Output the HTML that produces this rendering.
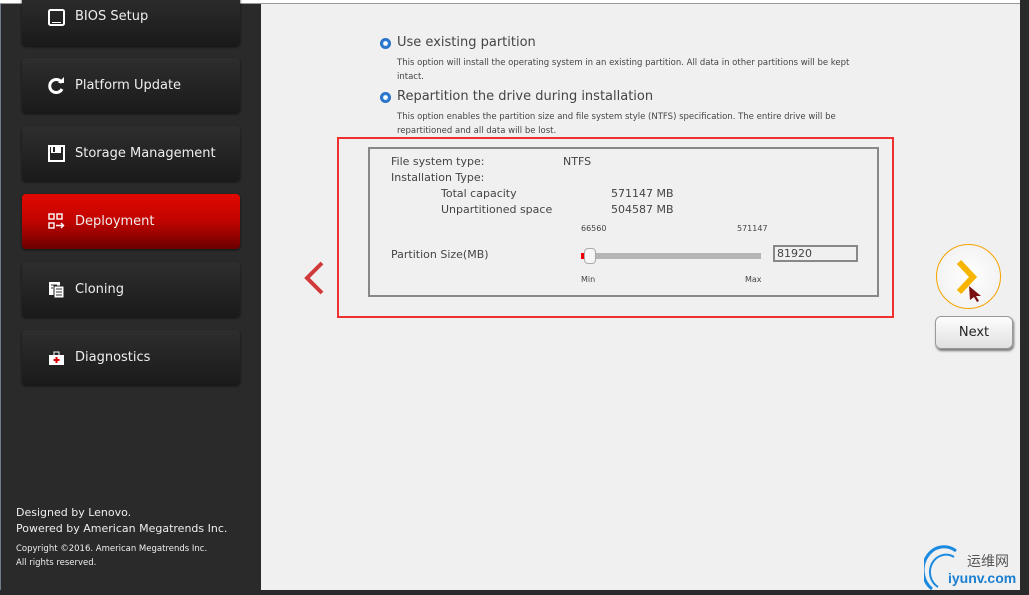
<!DOCTYPE html><html><head><style>
*{margin:0;padding:0;box-sizing:border-box}
body{width:1029px;height:595px;position:relative;overflow:hidden;background:#f0f0f0;font-family:"DejaVu Sans","Liberation Sans",sans-serif}
.side{position:absolute;left:0;top:4px;width:261px;height:586px;background:#2a2a2a;border-left:1px solid #6d7b8a}
.topbar{position:absolute;left:0;top:0;width:1029px;height:4px;background:#fff;border-bottom:1px solid #999}
.rb{position:absolute;right:0;top:0;width:9px;height:595px;background:#2a2a2a}
.bb{position:absolute;left:0;bottom:0;width:1029px;height:5px;background:#2a2a2a}
.btn{position:absolute;left:21px;width:218px;height:55px;border-radius:4px;background:linear-gradient(#2e2e2e,#1a1a1a);box-shadow:0 1px 2px #111;color:#eee;font-size:13px;line-height:55px;padding-left:53px}
.btn.act{background:linear-gradient(#e20800,#c00400 50%,#6a0000)}
.ic{position:absolute;left:26px;top:19px;width:17px;height:17px}
.ft{position:absolute;left:15px;color:#eee;white-space:nowrap}
.main{position:absolute;left:261px;top:5px;width:759px;height:585px;background:#f0f0f0}
.t{position:absolute;color:#444;white-space:nowrap}
.radio{position:absolute;width:11px;height:11px;border-radius:50%;background:radial-gradient(#fff 25%,#2f7fd6 35%,#1b5fb0)}
</style></head><body>
<div class="topbar"></div>
<div class="side">
<div class="btn" style="top:-12px;height:54px;line-height:50px">BIOS Setup<svg class="ic" style="top:17px" viewBox="0 0 17 17"><rect x="1" y="1" width="15" height="15" rx="1.5" fill="none" stroke="#fff" stroke-width="2"/><rect x="4" y="13" width="9" height="1" fill="#fff"/></svg></div>
<div class="btn" style="top:54px">Platform Update<svg class="ic" viewBox="0 0 17 17"><path d="M14 6A6.5 6.5 0 1 0 14 12" fill="none" stroke="#fff" stroke-width="3"/><path d="M10 6h6V0z" fill="#fff"/></svg></div>
<div class="btn" style="top:122px">Storage Management<svg class="ic" viewBox="0 0 17 17"><rect x="1" y="1" width="15" height="15" fill="none" stroke="#fff" stroke-width="2"/><rect x="3" y="1" width="10" height="7" fill="#fff"/><rect x="5" y="2" width="2" height="5" fill="#222"/></svg></div>
<div class="btn act" style="top:190px">Deployment<svg class="ic" viewBox="0 0 17 17"><g fill="none" stroke="#fff" stroke-width="1.4"><rect x="1" y="1" width="5" height="5"/><rect x="9" y="1" width="5" height="5"/><rect x="1" y="10" width="5" height="5"/><path d="M8 12.5h7M13 10l2.5 2.5L13 15"/></g></svg></div>
<div class="btn" style="top:258px">Cloning<svg class="ic" viewBox="0 0 17 17"><rect x="1" y="1" width="11" height="13" fill="#fff"/><rect x="6" y="5" width="10" height="12" fill="#fff" stroke="#222"/><path d="M8 8h6M8 11h6M8 14h6M3 4h6M3 7h2" stroke="#333"/></svg></div>
<div class="btn" style="top:326px">Diagnostics<svg class="ic" viewBox="0 0 17 17"><rect x="1" y="6" width="15" height="10" fill="#fff"/><rect x="6" y="3" width="5" height="4" fill="none" stroke="#fff"/><path d="M8.5 8v6M5.5 11h6" stroke="#d00" stroke-width="2"/></svg></div>
<div class="ft" style="top:502px;font-size:11px">Designed by Lenovo.</div>
<div class="ft" style="top:518px;font-size:11px">Powered by American Megatrends Inc.</div>
<div class="ft" style="top:540px;font-size:8.5px">Copyright ©2016. American Megatrends Inc.</div>
<div class="ft" style="top:554px;font-size:8.5px">All rights reserved.</div>
</div>
<div class="main">
<div class="radio" style="left:119px;top:33px"></div>
<div class="t" style="left:136px;top:30px;font-size:13px">Use existing partition</div>
<div class="t" style="left:136px;top:51px;font-size:8.5px;line-height:14px;white-space:normal;width:460px">This option will install the operating system in an existing partition. All data in other partitions will be kept intact.</div>
<div class="radio" style="left:119px;top:87px"></div>
<div class="t" style="left:136px;top:84px;font-size:13px">Repartition the drive during installation</div>
<div class="t" style="left:136px;top:105px;font-size:8.5px;line-height:14px;white-space:normal;width:460px">This option enables the partition size and file system style (NTFS) specification. The entire drive will be repartitioned and all data will be lost.</div>
<div style="position:absolute;left:76px;top:132px;width:557px;height:181px;border:2px solid #f03030"></div>
<div style="position:absolute;left:107px;top:142px;width:511px;height:150px;border:2px solid #888"></div>
<div class="t" style="left:130px;top:150px;font-size:11px">File system type:</div>
<div class="t" style="left:302px;top:150px;font-size:11px">NTFS</div>
<div class="t" style="left:130px;top:166px;font-size:11px">Installation Type:</div>
<div class="t" style="left:180px;top:182px;font-size:11px">Total capacity</div>
<div class="t" style="left:350px;top:182px;font-size:11px">571147 MB</div>
<div class="t" style="left:180px;top:198px;font-size:11px">Unpartitioned space</div>
<div class="t" style="left:350px;top:198px;font-size:11px">504587 MB</div>
<div class="t" style="left:320px;top:219px;font-size:8px">66560</div>
<div class="t" style="left:476px;top:219px;font-size:8px">571147</div>
<div class="t" style="left:130px;top:243px;font-size:11px">Partition Size(MB)</div>
<div style="position:absolute;left:320px;top:248px;width:180px;height:6px;background:#b5b5b5"></div>
<div style="position:absolute;left:320px;top:248px;width:4px;height:6px;background:#e00"></div>
<div style="position:absolute;left:323px;top:243px;width:12px;height:16px;border:1px solid #aaa;border-radius:4px;background:#f6f6f6"></div>
<div style="position:absolute;left:512px;top:240px;width:85px;height:17px;border:2px solid #888;font-size:11px;color:#444;padding-left:2px;line-height:13px">81920</div>
<div class="t" style="left:320px;top:270px;font-size:8px">Min</div>
<div class="t" style="left:484px;top:270px;font-size:8px">Max</div>
<svg style="position:absolute;left:41px;top:255px" width="24" height="36" viewBox="0 0 24 36"><path d="M20 3L5 18l15 15" fill="none" stroke="#d03a3a" stroke-width="4"/></svg>
<div style="position:absolute;left:675px;top:239px;width:65px;height:65px;border-radius:50%;border:1px solid #f5a300;background:radial-gradient(#fff,#eee)"></div>
<svg style="position:absolute;left:692px;top:253px" width="40" height="45" viewBox="0 0 40 45"><path d="M6 4l14 15L6 34" fill="none" stroke="#f7b500" stroke-width="6"/><path d="M16 28l12 10-5 0 3 5-2 1-3-5-4 3z" fill="#7a1010"/></svg>
<div style="position:absolute;left:674px;top:311px;width:78px;height:33px;border:1px solid #999;border-radius:6px;background:linear-gradient(#fdfdfd,#e0e0e0);box-shadow:1px 2px 2px #777;text-align:center;line-height:31px;font-size:13px;color:#222">Next</div>
<svg style="position:absolute;left:663px;top:538px" width="40" height="50" viewBox="0 0 40 50"><path d="M32 8A18 20 0 0 0 8 46" fill="none" stroke="#1a8ae0" stroke-width="3"/><path d="M30 14A13 14 0 0 0 14 44" fill="none" stroke="#1a8ae0" stroke-width="2"/></svg>
<div class="t" style="left:706px;top:546px;font-size:14px;color:#555;font-family:'Noto Sans CJK SC',sans-serif">运维网</div>
<div class="t" style="left:687px;top:565px;font-size:14px;color:#1a7fd0;font-weight:bold;font-family:'Liberation Sans',sans-serif">iyunv.com</div>
</div>
<div class="rb"></div><div class="bb"></div>
</body></html>
